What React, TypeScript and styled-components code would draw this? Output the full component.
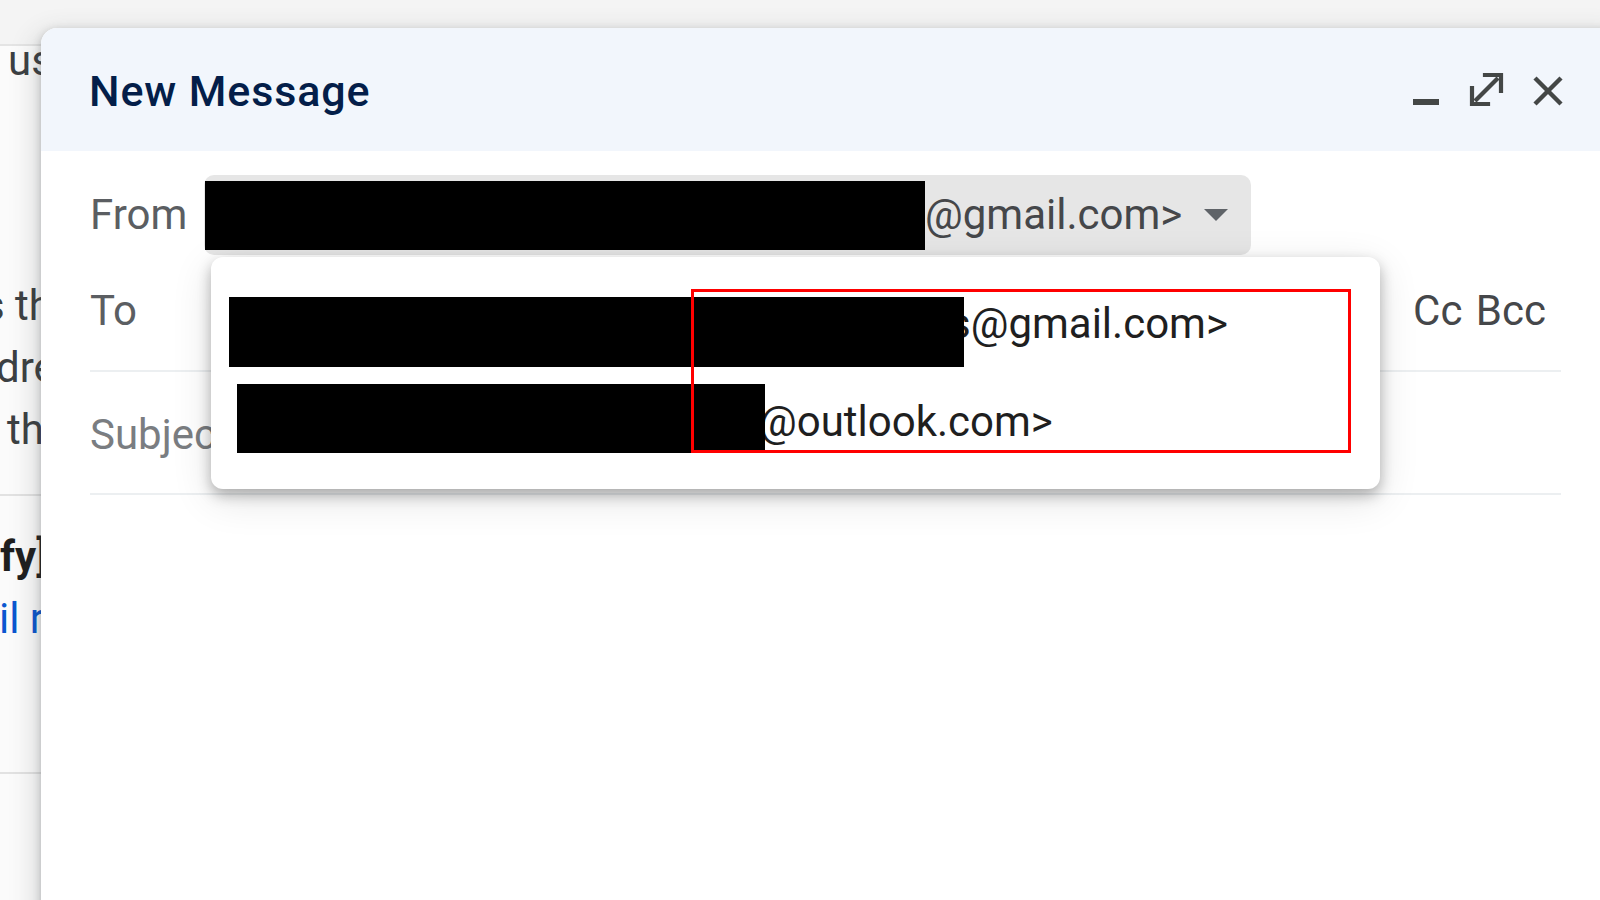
import React from "react";
import styled, { createGlobalStyle } from "styled-components";

const GlobalStyle = createGlobalStyle`
  html, body {
    margin: 0;
    padding: 0;
    width: 1600px;
    height: 900px;
    overflow: hidden;
    background: #ffffff;
    font-family: Roboto, "Liberation Sans", Arial, sans-serif;
  }
  * { box-sizing: border-box; }
`;

const Page = styled.div`
  position: relative;
  width: 1600px;
  height: 900px;
  overflow: hidden;
  background: #fbfbfb;
`;

/* ---------- Inbox behind the compose window ---------- */
const Inbox = styled.div`
  display: flex;
  flex-direction: column;
  width: 100%;
  color: #3c4043;
  font-size: 42px;
`;

const TopBand = styled.div`
  height: 46px;
  background: #f4f4f4;
  border-bottom: 2px solid #e4e4e4;
`;

const InboxLine = styled.div<{ $lh?: number; $mt?: number; $indent?: number; $bold?: boolean; $link?: boolean }>`
  height: ${(p) => p.$lh ?? 62}px;
  line-height: ${(p) => p.$lh ?? 62}px;
  margin-top: ${(p) => p.$mt ?? 0}px;
  padding-left: ${(p) => (p.$indent && p.$indent > 0 ? p.$indent : 0)}px;
  text-indent: ${(p) => (p.$indent && p.$indent < 0 ? p.$indent : 0)}px;
  white-space: nowrap;
  font-weight: ${(p) => (p.$bold ? 700 : 400)};
  color: ${(p) => (p.$link ? "#0b57d0" : p.$bold ? "#1f1f1f" : "#3c4043")};
`;

const InboxDivider = styled.div<{ $mt: number }>`
  margin-top: ${(p) => p.$mt}px;
  height: 2px;
  background: #e2e2e2;
`;

/* ---------- Compose window ---------- */
const Compose = styled.section`
  position: absolute;
  left: 41px;
  top: 28px;
  right: -20px;
  height: 920px;
  background: #ffffff;
  border-radius: 16px 16px 0 0;
  box-shadow: 0 12px 24px 9px rgba(60, 64, 67, 0.15), 0 3px 9px rgba(60, 64, 67, 0.3);
  display: flex;
  flex-direction: column;
`;

const Header = styled.header`
  height: 123px;
  flex-shrink: 0;
  display: flex;
  align-items: center;
  padding: 0 56px 0 48px;
  background: #f2f6fc;
  border-radius: 16px 16px 0 0;
`;

const Title = styled.h1`
  margin: 0;
  font-family: "Google Sans", Roboto, "Liberation Sans", sans-serif;
  font-weight: 500;
  font-size: 43px;
  line-height: 50px;
  padding-top: 2px;
  color: #041e49;
  letter-spacing: 0.9px;
`;

const HeaderIcons = styled.div`
  margin-left: auto;
  display: flex;
  align-items: center;
`;

const IconButton = styled.span<{ $ml?: number }>`
  display: flex;
  align-items: center;
  margin-left: ${(p) => p.$ml ?? 0}px;
  color: #444746;
`;

const Body = styled.div`
  display: flex;
  flex-direction: column;
  padding: 0 59px 0 49px;
`;

const FromRow = styled.div`
  margin-top: 24px;
  height: 80px;
  display: flex;
  align-items: center;
`;

const Label = styled.span<{ $w?: number; $muted?: boolean }>`
  flex-shrink: 0;
  width: ${(p) => (p.$w ? `${p.$w}px` : "auto")};
  font-size: 42px;
  line-height: 50px;
  color: ${(p) => (p.$muted ? "#7a7d81" : "#5b5e62")};
`;

const FromSelect = styled.div`
  position: relative;
  height: 80px;
  display: flex;
  align-items: center;
  padding: 0 23px 0 1px;
  background: #e6e6e6;
  border-radius: 10px;
`;

const Redaction = styled.span<{ $w: number; $h: number; $mt?: number; $mr?: number }>`
  position: relative;
  z-index: 1;
  display: block;
  flex-shrink: 0;
  width: ${(p) => p.$w}px;
  height: ${(p) => p.$h}px;
  margin-top: ${(p) => p.$mt ?? 0}px;
  margin-right: ${(p) => p.$mr ?? 0}px;
  background: #000000;
`;

const FromAddress = styled.span`
  font-size: 42px;
  line-height: 50px;
  color: #45474a;
  white-space: nowrap;
`;

const Caret = styled.span`
  margin-left: 22px;
  width: 0;
  height: 0;
  border-left: 12px solid transparent;
  border-right: 12px solid transparent;
  border-top: 12px solid #5f6368;
`;

const Popup = styled.div`
  position: absolute;
  top: calc(100% + 2px);
  left: 7px;
  width: 1169px;
  padding: 18px 0 18px;
  background: #ffffff;
  border-radius: 12px;
  box-shadow: 0 6px 14px rgba(0, 0, 0, 0.28), 0 10px 40px rgba(0, 0, 0, 0.12);
  z-index: 5;
`;

const PopupItem = styled.div<{ $indent: number }>`
  height: 98px;
  display: flex;
  align-items: flex-start;
  padding-left: ${(p) => p.$indent}px;
`;

const ItemAddress = styled.span`
  align-self: center;
  font-size: 42px;
  line-height: 50px;
  color: #1f1f1f;
  white-space: nowrap;
`;

const Highlight = styled.div`
  position: absolute;
  left: 480px;
  top: 32px;
  width: 660px;
  height: 164px;
  border: 3px solid #ff0000;
  z-index: 3;
  pointer-events: none;
`;

const FieldRow = styled.div<{ $pt: number; $pb: number }>`
  display: flex;
  align-items: center;
  padding: ${(p) => p.$pt}px 15px ${(p) => p.$pb}px 0;
  border-bottom: 2px solid #eceff1;
`;

const CcBcc = styled.span`
  margin-left: auto;
  font-size: 42px;
  line-height: 50px;
  color: #45474a;
  word-spacing: 3px;
`;

const MinimizeIcon = () => (
  <svg width="26" height="35" viewBox="0 0 26 35">
    <rect x="0" y="27" width="26" height="6" fill="currentColor" />
  </svg>
);

const ExpandIcon = () => (
  <svg width="35" height="35" viewBox="0 0 35 35" fill="none" stroke="currentColor" strokeWidth="4.2">
    <polyline points="16,3 32,3 32,19" strokeLinecap="square" />
    <polyline points="3,16 3,32 19,32" strokeLinecap="square" />
    <line x1="6" y1="29" x2="29" y2="6" />
  </svg>
);

const CloseIcon = () => (
  <svg width="32" height="32" viewBox="0 0 32 32" fill="none" stroke="currentColor" strokeWidth="4.5">
    <line x1="3" y1="4" x2="29" y2="30" />
    <line x1="29" y1="4" x2="3" y2="30" />
  </svg>
);

export default function App() {
  return (
    <Page>
      <GlobalStyle />
      <Inbox>
        <TopBand />
        <InboxLine $lh={30} $indent={8}>use your</InboxLine>
        <InboxLine $mt={199} $indent={-17}>s the</InboxLine>
        <InboxLine $indent={-4}>dress</InboxLine>
        <InboxLine $indent={7}>the</InboxLine>
        <InboxDivider $mt={33} />
        <InboxLine $mt={30} $bold>fy]</InboxLine>
        <InboxLine $link $indent={-1}>il re</InboxLine>
        <InboxDivider $mt={122} />
      </Inbox>

      <Compose>
        <Header>
          <Title>New Message</Title>
          <HeaderIcons>
            <IconButton>
              <MinimizeIcon />
            </IconButton>
            <IconButton $ml={30}>
              <ExpandIcon />
            </IconButton>
            <IconButton $ml={28}>
              <CloseIcon />
            </IconButton>
          </HeaderIcons>
        </Header>

        <Body>
          <FromRow>
            <Label $w={114}>From</Label>
            <FromSelect>
              <Redaction $w={720} $h={69} />
              <FromAddress>@gmail.com&gt;</FromAddress>
              <Caret />
              <Popup>
                <PopupItem $indent={18}>
                  <Redaction $w={735} $h={70} $mt={22} $mr={-15} />
                  <ItemAddress>s@gmail.com&gt;</ItemAddress>
                </PopupItem>
                <PopupItem $indent={26}>
                  <Redaction $w={528} $h={69} $mt={11} $mr={-6} />
                  <ItemAddress>@outlook.com&gt;</ItemAddress>
                </PopupItem>
                <Highlight />
              </Popup>
            </FromSelect>
          </FromRow>

          <FieldRow $pt={31} $pb={34}>
            <Label>To</Label>
            <CcBcc>Cc Bcc</CcBcc>
          </FieldRow>

          <FieldRow $pt={38} $pb={33}>
            <Label $muted>Subject</Label>
          </FieldRow>
        </Body>
      </Compose>
    </Page>
  );
}
